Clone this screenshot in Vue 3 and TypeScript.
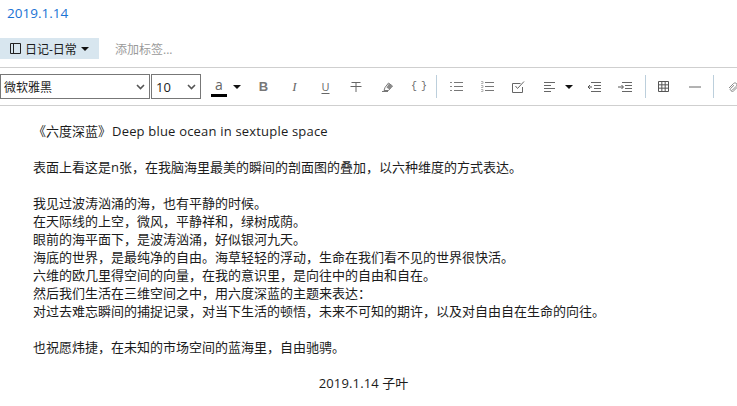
<script setup lang="ts">
const paragraphs: string[] = [
  '',
  '表面上看这是n张，在我脑海里最美的瞬间的剖面图的叠加，以六种维度的方式表达。',
  '',
  '我见过波涛汹涌的海，也有平静的时候。',
  '在天际线的上空，微风，平静祥和，绿树成荫。',
  '眼前的海平面下，是波涛汹涌，好似银河九天。',
  '海底的世界，是最纯净的自由。海草轻轻的浮动，生命在我们看不见的世界很快活。',
  '六维的欧几里得空间的向量，在我的意识里，是向往中的自由和自在。',
  '然后我们生活在三维空间之中，用六度深蓝的主题来表达：',
  '对过去难忘瞬间的捕捉记录，对当下生活的顿悟，未来不可知的期许，以及对自由自在生命的向往。',
  '',
  '也祝愿炜捷，在未知的市场空间的蓝海里，自由驰骋。',
  '',
]
</script>

<template>
  <div class="page">
    <div class="date">2019.1.14</div>
    <div class="tags">
      <div class="notebook">
        <svg class="nb-icon" width="11" height="11" viewBox="0 0 11 11"><path d="M.5.5h10v10H.5zM3.500.5v10" fill="none" stroke="#222" /></svg>
        <span>日记-日常</span>
        <i class="caret"></i>
      </div>
      <span class="add-tag">添加标签...</span>
    </div>
    <div class="toolbar">
      <div class="select font">
        <span>微软雅黑</span>
        <svg class="chev" width="9" height="6" viewBox="0 0 9 6"><path d="M1 1l3.500 3.500L8 1" fill="none" stroke="#555" stroke-width="1.600" /></svg>
      </div>
      <div class="select size">
        <span>10</span>
        <svg class="chev" width="9" height="6" viewBox="0 0 9 6"><path d="M1 1l3.500 3.500L8 1" fill="none" stroke="#555" stroke-width="1.600" /></svg>
      </div>
      <div class="color">
        <span class="a">a</span>
        <i class="bar"></i>
      </div>
      <i class="caret c-color"></i>
      <span class="tb tb-b">B</span>
      <span class="tb tb-i">I</span>
      <span class="tb tb-u">U</span>
      <span class="tb tb-s">
        <svg width="12" height="12" viewBox="0 0 12 12"><path d="M1.500 1.500h9M6 1.500v9.500M.5 5.500h11" fill="none" stroke="#666" /></svg>
      </span>
      <span class="tb">
        <svg width="12" height="10" viewBox="0 0 12 10"><path d="M0 9.500h6M2 8.500l1-3 3.500-4.500 4 3-4 4.500z" fill="none" stroke="#777" /><path d="M4.500 5.500l2.500-4 3.500 2.500-3 3.500z" fill="#8a8a8a" /></svg>
      </span>
      <span class="tb tb-code">{ }</span>
      <i class="sep s1"></i>
      <span class="tb">
        <svg width="13" height="11" viewBox="0 0 13 11"><path d="M4 1.500h9M4 5.500h9M4 9.500h9" stroke="#777" fill="none" /><path d="M0 1.500h2M0 5.500h2M0 9.500h2" stroke="#888" fill="none" /></svg>
      </span>
      <span class="tb">
        <svg width="13" height="11" viewBox="0 0 13 11"><path d="M4 1.500h9M4 5.500h9M4 9.500h9" stroke="#777" fill="none" /><path d="M0 .5h2v2h-2M0 4.500h2v2h-2M0 8.500h2v2h-2" stroke="#999" stroke-width=".7" fill="none" /></svg>
      </span>
      <span class="tb">
        <svg width="13" height="12" viewBox="0 0 13 12"><path d="M10.500 6v5.500H.5v-9h8" fill="none" stroke="#666" /><path d="M3.500 5l2 2.500L12 .5" fill="none" stroke="#666" /></svg>
      </span>
      <span class="tb tb-align">
        <svg width="12" height="10" viewBox="0 0 12 10"><path d="M0 .5h11M0 3.500h7M0 6.500h11M0 9.500h7" stroke="#666" fill="none" /></svg>
      </span>
      <i class="caret c-align"></i>
      <span class="tb">
        <svg width="14" height="10" viewBox="0 0 14 10"><path d="M4 .5h10M7 3.500h7M7 6.500h7M4 9.500h10" stroke="#666" fill="none" /><path d="M5 5H1M3 3L1 5l2 2" stroke="#555" fill="none" /></svg>
      </span>
      <span class="tb">
        <svg width="14" height="10" viewBox="0 0 14 10"><path d="M4 .5h10M7 3.500h7M7 6.500h7M4 9.500h10" stroke="#666" fill="none" /><path d="M0 5h5M3.500 3L5.500 5l-2 2" stroke="#555" fill="none" /></svg>
      </span>
      <i class="sep s2"></i>
      <span class="tb">
        <svg width="11" height="11" viewBox="0 0 11 11"><path d="M.5.5h10v10H.5zM.5 3.830h10M.5 7.170h10M3.830.5v10M7.170.5v10" stroke="#555" fill="none" /></svg>
      </span>
      <span class="tb tb-hr">
        <svg width="12" height="2" viewBox="0 0 12 2"><path d="M0 1h12" stroke="#666" fill="none" /></svg>
      </span>
      <i class="sep s3"></i>
      <span class="tb tb-clip">
        <svg width="10" height="10" viewBox="0 0 10 10"><path d="M1 6l4.500-4.500c1-1 2.500-.5 3 0s.5 2-.5 3L4.500 8c-.7.700-1.500.7-2 .2s-.4-1.200.3-1.900L6 3.200M3.500 9.500c.8.300 1.500 0 2.300-.8L9.500 5" fill="none" stroke="#8a8a8a" stroke-width="1" /></svg>
      </span>
    </div>
    <div class="editor">
      <p class="line">《六度深蓝》<span class="en title-en">Deep blue ocean in sextuple space</span></p>
      <p v-for="(line, i) in paragraphs" :key="i" class="line">{{ line || '\u00a0' }}</p>
      <p class="line center"><span class="en">2019.1.14</span> 子叶</p>
    </div>
  </div>
</template>

<style scoped>
.page {
  width: 737px;
  height: 406px;
  overflow: hidden;
  background: #fff;
  color: #1c1c1c;
  font-family: "Open Sans", "Noto Sans CJK SC", sans-serif;
  font-size: 13px;
}
.date {
  height: 38px;
  padding: 3px 0 0 7px;
  box-sizing: border-box;
  color: #1a73d4;
  font-size: 13.500px;
  line-height: 20px;
}
.tags {
  display: flex;
  align-items: center;
  height: 21px;
  margin-bottom: 8px;
}
.notebook {
  display: flex;
  align-items: center;
  gap: 4px;
  width: 99px;
  height: 21px;
  padding-left: 10px;
  box-sizing: border-box;
  background: #d8e6ef;
  font-size: 12px;
}
.caret {
  display: block;
  flex: none;
  width: 0;
  height: 0;
  border-left: 4px solid transparent;
  border-right: 4px solid transparent;
  border-top: 4px solid #111;
}
.add-tag {
  margin-left: 16px;
  color: #9a9a9a;
  font-size: 12px;
}
.toolbar {
  display: flex;
  align-items: center;
  width: 737px;
  height: 39px;
  box-sizing: border-box;
  border-top: 1px solid #cfcfcf;
  border-bottom: 1px solid #cfcfcf;
  overflow: hidden;
}
.select {
  position: relative;
  flex: none;
  display: flex;
  align-items: center;
  height: 25px;
  box-sizing: border-box;
  border: 1px solid #777;
  padding-left: 3px;
  font-size: 12px;
}
.font { width: 150px; }
.size { width: 50px; margin-left: 1px; padding-left: 4px; font-size: 13px; }
.chev { position: absolute; right: 4px; top: 9px; }
.color {
  flex: none;
  display: flex;
  flex-direction: column;
  align-items: center;
  width: 16px;
  margin-left: 10px;
}
.a { font-size: 14px; line-height: 17px; color: #666; }
.bar { display: block; width: 16px; height: 3px; background: #000; margin-top: 1px; }
.c-color { margin-left: 6px; margin-right: 12px; }
.tb {
  flex: none;
  display: flex;
  align-items: center;
  justify-content: center;
  width: 21px;
  height: 21px;
  margin-right: 10px;
  color: #666;
}
.tb-b { font-weight: 700; font-size: 13px; color: #777; font-family: "Liberation Sans", sans-serif; }
.tb-i { font-style: italic; font-size: 13px; font-family: "Liberation Serif", serif; }
.tb-u { font-size: 11px; text-decoration: underline; text-underline-offset: 2px; }
.tb-s { transform: translateX(-1px); }
.tb-code { font-size: 10px; letter-spacing: -1px; font-family: "Liberation Mono", monospace; margin-right: 7px; }
.tb-align { margin-right: 5px; }
.c-align { margin-right: 10px; }
.tb-hr { margin-right: 8px; }
.tb-clip { margin-left: 0; margin-right: 0; }
.sep {
  display: block;
  flex: none;
  width: 1px;
  height: 23px;
  background: #bccfdc;
}
.s1 { margin-right: 9px; }
.s2 { margin-right: 7px; }
.s3 { margin-right: 8px; }
.editor {
  padding: 16px 43px 0 33px;
}
.line {
  margin: 0;
  height: 18px;
  line-height: 18px;
  white-space: nowrap;
}
.en {
  letter-spacing: 0.15px;
}
.title-en {
  margin-left: 1px;
  letter-spacing: 0.19px;
}
.center {
  text-align: center;
}
</style>
